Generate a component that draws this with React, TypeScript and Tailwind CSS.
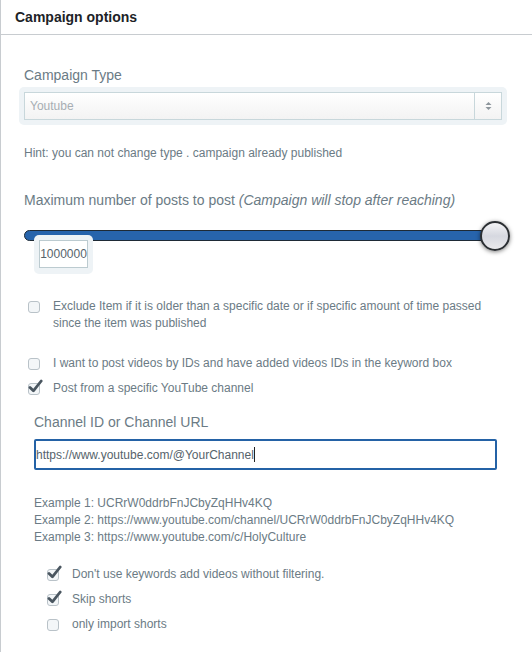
import React from "react";

const Check: React.FC<{ checked?: boolean }> = ({ checked }) => (
  <span className="relative block w-[12px] h-[12px] rounded-[3px] border border-[#b9c2c8] bg-[#f3f6f8]">
    {checked && (
      <svg
        className="absolute left-[-1px] top-[-5px]"
        width="15"
        height="15"
        viewBox="0 0 15 15"
      >
        <path
          d="M2 8.4 L5.4 11.8 L13.2 2"
          fill="none"
          stroke="#4a5660"
          strokeWidth="2.8"
          strokeLinecap="round"
          strokeLinejoin="round"
        />
      </svg>
    )}
  </span>
);

const CheckRow: React.FC<{ checked?: boolean; children: React.ReactNode }> = ({
  checked,
  children,
}) => (
  <label className="flex items-start gap-[13px]">
    <span className="flex shrink-0 pt-[3px]">
      <Check checked={checked} />
    </span>
    <span className="text-[12px] leading-[17px] text-[#6b7b85]">{children}</span>
  </label>
);

const App: React.FC = () => {
  return (
    <div
      className="w-[532px] h-[652px] bg-white border-l border-[#c8ccd0] overflow-hidden"
      style={{ fontFamily: '"Liberation Sans", Arial, sans-serif' }}
    >
      <div className="h-[35px] border-b border-[#c8ccd0] flex items-center px-[14px]">
        <h2 className="text-[14px] font-bold text-[#1d2327]">Campaign options</h2>
      </div>

      <div className="pl-[23px] pr-[24px] pt-[31px]">
        <div className="text-[14px] leading-[18px] text-[#6b7b85]">Campaign Type</div>
        <div className="mt-[3px] ml-[-5px] w-[488px] rounded-[5px] bg-[#eef3f6] p-[5px]">
          <div className="flex h-[28px] border border-[#c8d7db] bg-gradient-to-b from-white to-[#f3f3f3]">
            <div className="flex-1 flex items-center pl-[5px] text-[12px] text-[#a7aeb3]">
              Youtube
            </div>
            <div className="w-[27px] border-l border-[#c8d7db] flex items-center justify-center">
              <svg width="7" height="10" viewBox="0 0 7 10">
                <path d="M3.5 1 L6.5 4 L0.5 4 Z" fill="#8d969c" />
                <path d="M3.5 9 L6.5 6 L0.5 6 Z" fill="#8d969c" />
              </svg>
            </div>
          </div>
        </div>

        <div className="mt-[20px] text-[12px] leading-[16px] text-[#6b7b85]">
          Hint: you can not change type . campaign already published
        </div>

        <div className="mt-[30px] text-[14px] leading-[18px] text-[#6b7b85]">
          Maximum number of posts to post{" "}
          <i>(Campaign will stop after reaching)</i>
        </div>

        <div className="mt-[12px] relative h-[28px] w-[486px]">
          <div className="absolute left-0 right-[6px] top-[9px] h-[11px] rounded-full border border-[#1e2a36] bg-[#2764ac]" />
          <div className="absolute right-0 top-0 w-[30px] h-[30px] rounded-full border-2 border-[#2b2f33] bg-gradient-to-b from-[#f4f4f6] via-[#d6d8e0] to-[#e9e9ec] shadow-[0_1px_4px_rgba(0,0,0,0.5)]" />
        </div>
        <div className="relative -mt-[14px] ml-[10px] w-[59px] rounded-[5px] bg-[#eef3f6] px-[5px] pt-[5px] pb-[6px]">
          <div className="h-[28px] border border-[#bccbd0] bg-white flex items-center justify-center text-[12px] text-[#56636b]">
            1000000
          </div>
        </div>

        <div className="mt-[24px] pl-[4px]">
          <CheckRow>
            Exclude Item if it is older than a specific date or if specific amount of time passed
            since the item was published
          </CheckRow>
        </div>

        <div className="mt-[23px] pl-[4px] flex flex-col gap-[8px]">
          <CheckRow>
            I want to post videos by IDs and have added videos IDs in the keyword box
          </CheckRow>
          <CheckRow checked>Post from a specific YouTube channel</CheckRow>
        </div>

        <div className="pl-[10px] mt-[16px]">
          <div className="text-[14px] leading-[18px] text-[#6b7b85]">
            Channel ID or Channel URL
          </div>
          <div className="mt-[8px] w-[463px] h-[31px] border-2 border-[#2462a6] rounded-[2px] flex items-center text-[12px] text-[#56636b]">
            https://www.youtube.com/@YourChannel
            <span className="inline-block w-[1px] h-[15px] bg-[#222]" />
          </div>

          <div className="mt-[25px] text-[12px] leading-[17px] text-[#6b7b85]">
            <div>Example 1: UCRrW0ddrbFnJCbyZqHHv4KQ</div>
            <div>Example 2: https://www.youtube.com/channel/UCRrW0ddrbFnJCbyZqHHv4KQ</div>
            <div>Example 3: https://www.youtube.com/c/HolyCulture</div>
          </div>

          <div className="mt-[20px] pl-[13px] flex flex-col gap-[8px]">
            <CheckRow checked>Don't use keywords add videos without filtering.</CheckRow>
            <CheckRow checked>Skip shorts</CheckRow>
            <CheckRow>only import shorts</CheckRow>
          </div>
        </div>
      </div>
    </div>
  );
};

export default App;
